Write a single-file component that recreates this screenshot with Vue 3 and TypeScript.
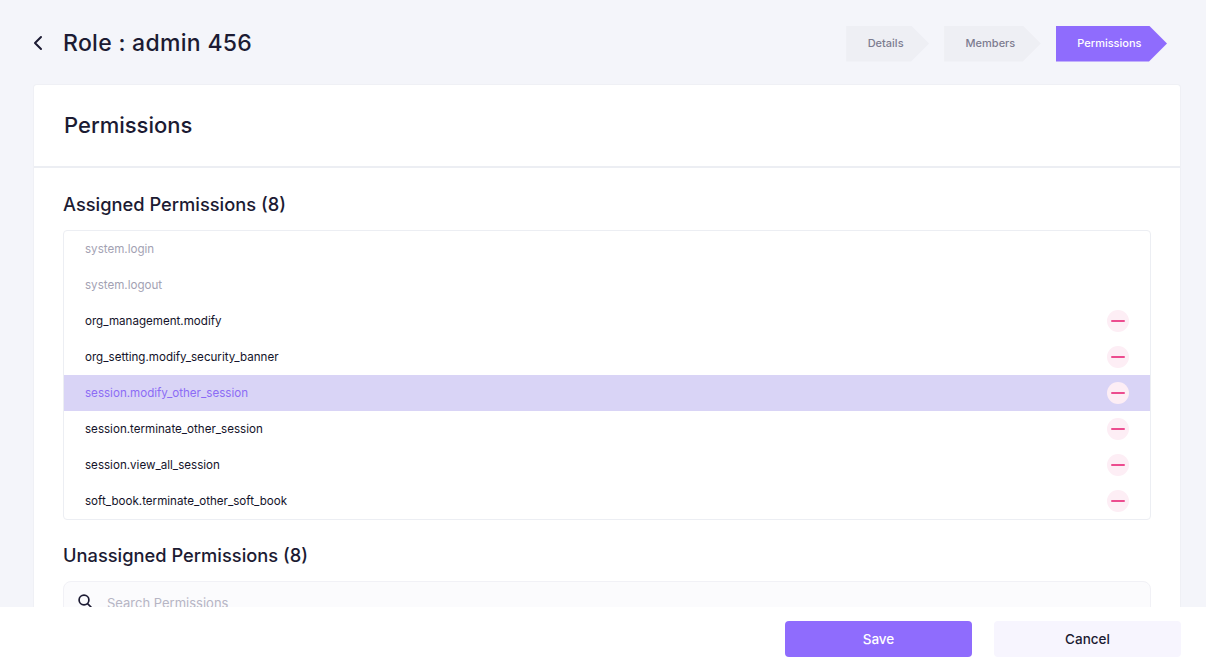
<script setup lang="ts">
interface Permission {
  name: string;
  locked?: boolean;
  active?: boolean;
}

const steps = [
  { label: 'Details', active: false },
  { label: 'Members', active: false },
  { label: 'Permissions', active: true },
];

const assigned: Permission[] = [
  { name: 'system.login', locked: true },
  { name: 'system.logout', locked: true },
  { name: 'org_management.modify' },
  { name: 'org_setting.modify_security_banner' },
  { name: 'session.modify_other_session', active: true },
  { name: 'session.terminate_other_session' },
  { name: 'session.view_all_session' },
  { name: 'soft_book.terminate_other_soft_book' },
];
</script>

<template>
  <div class="page">
    <div class="content">
      <header class="top">
        <div class="title-wrap">
          <button type="button" class="back" aria-label="Back">
            <svg width="12" height="16" viewBox="0 0 12 16" fill="none">
              <path d="M8 2 L2 8 L8 14" stroke="#1c1b33" stroke-width="2" stroke-linecap="round" stroke-linejoin="round" />
            </svg>
          </button>
          <h1 class="title">Role : admin 456</h1>
        </div>
        <nav class="steps">
          <div v-for="s in steps" :key="s.label" class="step" :class="{ active: s.active }">{{ s.label }}</div>
        </nav>
      </header>

      <section class="card">
        <div class="card-head">
          <h2>Permissions</h2>
        </div>
        <div class="card-body">
          <h3 class="section-title">Assigned Permissions (8)</h3>
          <ul class="perm-list">
            <li
              v-for="p in assigned"
              :key="p.name"
              class="perm-row"
              :class="{ locked: p.locked, active: p.active }"
            >
              <span>{{ p.name }}</span>
              <button v-if="!p.locked" type="button" class="remove" aria-label="Remove"><i></i></button>
            </li>
          </ul>

          <h3 class="section-title second">Unassigned Permissions (8)</h3>
          <div class="search">
            <svg class="search-icon" width="16" height="16" viewBox="0 0 16 16" fill="none">
              <circle cx="7" cy="7" r="4.9" stroke="#1c1b33" stroke-width="1.7" />
              <path d="M10.8 10.8 L14 14" stroke="#1c1b33" stroke-width="1.7" stroke-linecap="round" />
            </svg>
            <span class="placeholder">Search Permissions</span>
          </div>
        </div>
      </section>
    </div>

    <footer class="footer">
      <button type="button" class="btn save">Save</button>
      <button type="button" class="btn cancel">Cancel</button>
    </footer>
  </div>
</template>

<style>
body {
  margin: 0;
  background: #f4f5fa;
}
</style>

<style scoped>
.page {
  height: 100vh;
  display: flex;
  flex-direction: column;
  font-family: Inter, "Liberation Sans", sans-serif;
  color: #1c1b33;
}

.content {
  flex: 1;
  min-height: 0;
  overflow: hidden;
  padding: 0 25px 0 33px;
}

.top {
  height: 84px;
  display: flex;
  align-items: center;
  justify-content: space-between;
  padding-top: 3px;
  box-sizing: border-box;
}

.title-wrap {
  display: flex;
  align-items: center;
  gap: 18px;
  margin-bottom: 2px;
}

.back {
  width: 12px;
  height: 16px;
  padding: 0;
  border: none;
  background: none;
  display: flex;
}

.title {
  margin: 0;
  font-size: 23px;
  font-weight: 500;
  letter-spacing: 0.3px;
}

.steps {
  display: flex;
  gap: 15px;
  margin-right: 14px;
}

.step {
  height: 36px;
  padding: 0 25.5px 2px 21.5px;
  box-sizing: border-box;
  display: flex;
  align-items: center;
  font-size: 11px;
  font-weight: 500;
  color: #7d7c90;
  background: #eeeff4;
  clip-path: polygon(0 0, calc(100% - 18px) 0, 100% 50%, calc(100% - 18px) 100%, 0 100%);
}

.step.active {
  background: #8f6cfd;
  color: #fff;
}

.card {
  background: #fff;
  border: 1px solid #eff0f5;
  border-bottom: none;
  border-radius: 4px 4px 0 0;
}

.card-head {
  height: 83px;
  display: flex;
  align-items: center;
  padding: 0 0 2px 30px;
  border-bottom: 2px solid #eceef3;
  box-sizing: border-box;
}

.card-head h2 {
  margin: 0;
  font-size: 22px;
  font-weight: 500;
}

.card-body {
  padding: 0 29px;
}

.section-title {
  margin: 0;
  height: 62px;
  padding-top: 10px;
  box-sizing: border-box;
  display: flex;
  align-items: center;
  font-size: 18.3px;
  font-weight: 500;
}

.section-title.second {
  height: 61px;
  padding-top: 9px;
}

.perm-list {
  list-style: none;
  margin: 0;
  padding: 0;
  border: 1px solid #eceef3;
  border-radius: 4px;
}

.perm-row {
  height: 36px;
  display: flex;
  align-items: center;
  justify-content: space-between;
  padding: 0 21px;
  font-size: 11.6px;
  color: #14132a;
}

.perm-row.locked {
  color: #a3a2b3;
}

.perm-row.active {
  background: #d9d4f6;
  color: #8c6cf5;
}

.remove {
  width: 22px;
  height: 22px;
  padding: 0;
  border: none;
  border-radius: 50%;
  background: #fdeef5;
  display: flex;
  align-items: center;
  justify-content: center;
}

.remove i {
  display: block;
  width: 14px;
  height: 2px;
  border-radius: 1px;
  background: #ec4c8f;
}

.search {
  height: 42px;
  display: flex;
  align-items: center;
  gap: 13px;
  padding-left: 13px;
  border: 1px solid #f1f1f6;
  border-radius: 8px;
  background: #fbfbfd;
}

.search-icon {
  margin: 0 1px 4px 0;
}

.placeholder {
  font-size: 13px;
  color: #b6b5c4;
}

.footer {
  height: 61px;
  flex-shrink: 0;
  box-sizing: border-box;
  padding: 3px 25px 0 0;
  background: #fff;
  display: flex;
  align-items: center;
  justify-content: flex-end;
  gap: 22px;
}

.btn {
  width: 187px;
  height: 36px;
  border: none;
  border-radius: 4px;
  font-family: inherit;
  font-size: 13.5px;
  font-weight: 500;
}

.save {
  background: #8f6cfd;
  color: #fff;
}

.cancel {
  background: #f7f5fe;
  color: #1c1b33;
}
</style>
